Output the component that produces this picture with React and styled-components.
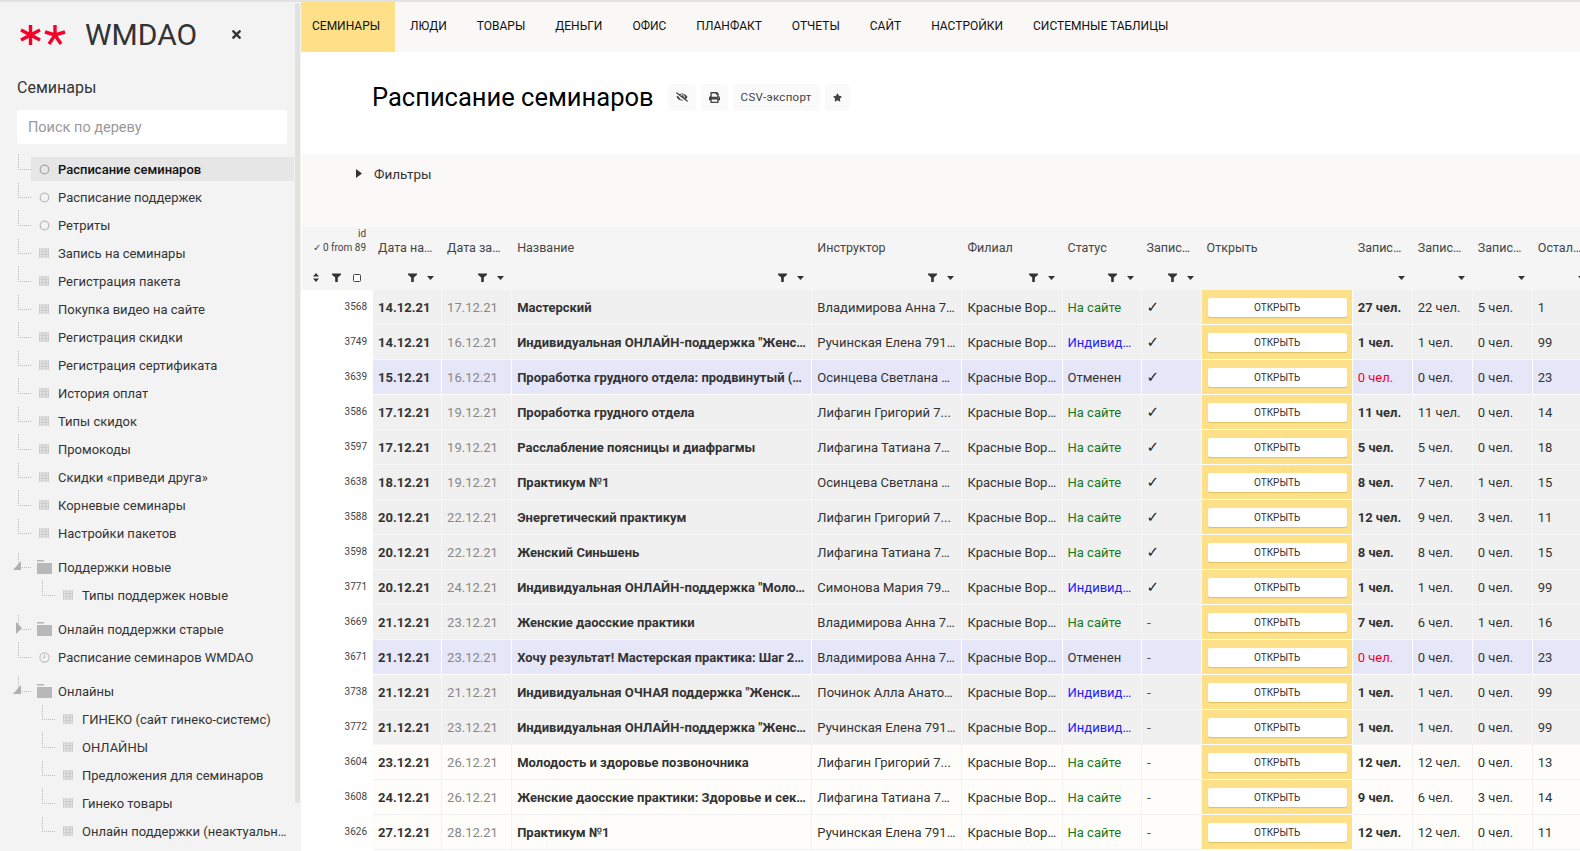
import React from 'react'
import styled, { createGlobalStyle } from 'styled-components'
import { FaEyeSlash, FaPrint, FaStar, FaTimes } from 'react-icons/fa'

const GlobalStyle = createGlobalStyle`
    html, body {
        margin: 0;
        padding: 0;
        background: #fff;
        font-family: Roboto, "Liberation Sans", sans-serif;
        color: #333;
    }
    * {
        box-sizing: border-box;
    }
`

const Page = styled.div`
    display: flex;
    width: 1580px;
    height: 851px;
    overflow: hidden;
    border-top: 2px solid #e2e2e2;
`

const Sidebar = styled.aside`
    position: relative;
    flex: 0 0 301px;
    height: 100%;
    overflow: hidden;
    background: #f3f3f3;
`

const ScrollThumb = styled.div`
    position: absolute;
    top: 1px;
    right: 1px;
    width: 5px;
    height: 800px;
    border-radius: 3px;
    background: #e1e1de;
`

const LogoRow = styled.div`
    display: flex;
    align-items: center;
    height: 64px;
    padding: 1px 0 0 20px;
`

const LogoName = styled.span`
    margin-left: 19px;
    font-size: 30px;
    color: #333;
`

const CloseButton = styled.span`
    display: flex;
    margin-left: 33px;
    font-size: 13px;
    color: #333;
`

const TreeTitle = styled.div`
    margin-top: 10px;
    padding-left: 17px;
    font-size: 16px;
    line-height: 24px;
    color: #333;
`

const TreeSearch = styled.input`
    display: block;
    width: 270px;
    height: 34px;
    margin: 10px 0 11px 17px;
    padding: 0 11px;
    border: none;
    border-radius: 3px;
    background: #fff;
    font-family: inherit;
    font-size: 14.5px;
    outline: none;

    &::placeholder {
        color: #999;
    }
`

const TreeGroup = styled.div`
    margin-bottom: ${props => props.$last ? 0 : 6}px;
`

const TreeItem = styled.div`
    position: relative;
    display: flex;
    align-items: center;
    height: 28px;
    margin-left: ${props => props.$level * 24}px;
    padding: 0 7px 0 31px;

    &::before {
        content: '';
        position: absolute;
        left: 18px;
        top: 0;
        width: 12px;
        height: 14px;
        border-left: 1px dotted #bbb;
        border-bottom: 1px dotted #bbb;
    }
`

const TreeLabel = styled.div`
    display: flex;
    flex: 1;
    align-items: center;
    min-width: 0;
    height: 24px;
    padding-left: 8px;
    background: ${props => props.$active ? '#e6e6e6' : 'transparent'};
`

const IconSlot = styled.span`
    display: flex;
    flex: 0 0 10px;
    justify-content: center;
    width: 10px;
    min-width: 0;
    margin-right: 9px;
`

const TreeText = styled.span`
    overflow: hidden;
    font-size: 13px;
    font-weight: ${props => props.$active ? 500 : 400};
    color: ${props => props.$active ? '#111' : '#333'};
    white-space: nowrap;
    text-overflow: ellipsis;
`

const Arrow = styled.svg`
    position: absolute;
    left: 13px;
    top: 6px;
`

const Main = styled.main`
    flex: 1;
    min-width: 0;
    height: 100%;
    overflow: hidden;
`

const Nav = styled.nav`
    display: flex;
    height: 50px;
    background: #f9f8f6;
`

const NavItem = styled.a`
    display: flex;
    align-items: center;
    height: 100%;
    padding: 0 15px 2px ${props => props.$active ? 11 : 15}px;
    background: ${props => props.$active ? '#fde087' : 'transparent'};
    font-size: 12px;
    color: #111;
    text-transform: uppercase;
    white-space: nowrap;
`

const PageHead = styled.header`
    display: flex;
    align-items: center;
    height: 103px;
    padding: 0 0 13px 71px;
`

const PageTitle = styled.h1`
    margin: 0 14px 0 0;
    font-size: 25.5px;
    font-weight: 400;
    color: #000;
`

const HeadButton = styled.button`
    display: flex;
    align-items: center;
    height: 27px;
    margin-right: 5px;
    padding: 0 8px;
    border: none;
    border-radius: 4px;
    background: #fafafa;
    font-family: inherit;
    font-size: 11.5px;
    color: #444;
    letter-spacing: 0.3px;
`

const FilterBand = styled.div`
    display: flex;
    align-items: center;
    gap: 12px;
    height: 72px;
    padding: 0 0 35px 54px;
    margin-left: 1px;
    background: #faf9f7;
    font-size: 13.5px;
    color: #333;
`

const DataTable = styled.table`
    width: 1291px;
    margin-left: 1px;
    border-collapse: separate;
    border-spacing: 0;
    table-layout: fixed;
`

const HeadRow = styled.tr`
    height: ${props => props.$height}px;
    background: #f5f5f5;
`

const HeadCell = styled.th`
    overflow: hidden;
    padding: 3px 5px 0;
    font-size: 12.5px;
    font-weight: 400;
    color: #444;
    text-align: left;
    white-space: nowrap;
    text-overflow: ellipsis;
`

const IdHead = styled.th`
    padding: 0 7px 10px 0;
    font-size: 10px;
    font-weight: 400;
    line-height: 14px;
    color: #444;
    text-align: right;
    white-space: nowrap;
`

const ToolCell = styled.td`
    padding: 0 ${props => props.$right || 8}px 0 0;
    vertical-align: middle;
`

const ToolGroup = styled.div`
    display: flex;
    align-items: center;
    justify-content: ${props => props.$spread ? 'space-between' : 'flex-end'};
    gap: 10px;
    padding: ${props => props.$spread ? '0 0 0 11px' : 0};
`

const rowColors = {
    grey: { bg: '#f0f0f0', line: '#f6f6f6' },
    purple: { bg: '#e5e6f7', line: '#fff' },
    cream: { bg: '#fefdf9', line: '#f2f2f2' },
}

const BodyRow = styled.tr`
    height: 35px;
`

const IdCell = styled.td`
    padding: 0 6px 3px 0;
    font-size: 10px;
    color: #444;
    text-align: right;
`

const Cell = styled.td`
    overflow: hidden;
    padding: 0 5px;
    border-right: 1px solid ${props => rowColors[props.$tone].line};
    border-bottom: 1px solid ${props => rowColors[props.$tone].line};
    background: ${props => rowColors[props.$tone].bg};
    font-size: 13px;
    font-weight: ${props => props.$bold ? 700 : 400};
    color: ${props => props.$color || '#333'};
    white-space: nowrap;
    text-overflow: ellipsis;
`

const Mark = styled.span`
    font-family: "DejaVu Sans", sans-serif;
    font-size: ${props => props.$done ? 15 : 13}px;
    line-height: 1;
    color: ${props => props.$done ? '#222' : '#555'};
`

const OpenCell = styled.td`
    padding: 0 5px 0 6px;
    border-right: 1px solid #fff;
    border-bottom: 1px solid #fff;
    background: #fde087;
`

const OpenButton = styled.button`
    display: block;
    width: 139px;
    height: 19px;
    padding: 0;
    border: none;
    border-radius: 2px;
    background: #fff;
    box-shadow: 0 1px 1px rgba(190, 160, 60, 0.5);
    font-family: inherit;
    font-size: 10px;
    color: #333;
    text-transform: uppercase;
`

const Logo = () => (
    <svg width="46" height="22" viewBox="0 0 46 22" stroke="#f6002a" strokeWidth="3.4" fill="none">
        <path d="M10.5 1 V21 M1 6 L10.5 11 L20 6 M1 16 L10.5 11 L20 16" />
        <path d="M35 1 V11 M25 8 L35 11 L45 8 M29 20 L35 11 L41 20" />
    </svg>
)

const GridIcon = () => (
    <svg width="11" height="10" viewBox="0 0 11 10" fill="none" stroke="#c8c8c8" strokeWidth="1">
        <rect x="0.5" y="0.5" width="10" height="9" fill="#e4e4e4" />
        <path d="M0.5 3.5 H10.5 M0.5 6.5 H10.5 M4 0.5 V9.5 M7.5 0.5 V9.5" />
    </svg>
)

const CircleIcon = ({ dark }) => (
    <svg width="11" height="11" viewBox="0 0 11 11" fill="none" style={{ flexShrink: 0 }}>
        <circle cx="5.5" cy="5.5" r="4.3" stroke={dark ? '#a8a8a8' : '#bdbdbd'} strokeWidth="1.3" />
    </svg>
)

const ClockIcon = () => (
    <svg width="11" height="11" viewBox="0 0 11 11" fill="none" stroke="#bdbdbd" strokeWidth="1.1" style={{ flexShrink: 0 }}>
        <circle cx="5.5" cy="5.5" r="4.6" />
        <path d="M5.5 2.8 V5.8 H3.5" />
    </svg>
)

const FolderIcon = () => (
    <svg width="15" height="14" viewBox="0 0 15 14" style={{ flexShrink: 0 }}>
        <rect x="0" y="0" width="7" height="1.5" fill="#b5b5b5" />
        <rect x="0" y="3" width="15" height="11" fill="#b8b8b8" />
    </svg>
)

const OpenArrow = () => (
    <Arrow width="10" height="12" viewBox="0 0 10 12">
        <path d="M8 2 V11 H0 Z" fill="#b0b0b0" />
    </Arrow>
)

const ClosedArrow = () => (
    <Arrow width="10" height="14" viewBox="0 0 10 14">
        <path d="M3 1 L9 7 L3 13 Z" fill="#b0b0b0" />
    </Arrow>
)

const Funnel = () => (
    <svg width="9" height="9" viewBox="0 0 9 9">
        <path d="M0 0.5 H9 V1.8 L5.8 4.5 V9 H3.2 V4.5 L0 1.8 Z" fill="#333" />
    </svg>
)

const Caret = () => (
    <svg width="7" height="4" viewBox="0 0 7 4">
        <path d="M0 0 H7 L3.5 4 Z" fill="#333" />
    </svg>
)

const SortIcon = () => (
    <svg width="6" height="9" viewBox="0 0 6 9">
        <path d="M3 0 L6 3.5 H0 Z M3 9 L6 5.5 H0 Z" fill="#333" />
    </svg>
)

const CheckBox = () => (
    <svg width="8" height="8" viewBox="0 0 8 8" fill="#fff" stroke="#444" strokeWidth="1">
        <rect x="0.5" y="0.5" width="7" height="7" rx="1" />
    </svg>
)

const plainItems = [
    'Запись на семинары', 'Регистрация пакета', 'Покупка видео на сайте', 'Регистрация скидки',
    'Регистрация сертификата', 'История оплат', 'Типы скидок', 'Промокоды',
    'Скидки «приведи друга»', 'Корневые семинары', 'Настройки пакетов',
]

const onlineItems = [
    'ГИНЕКО (сайт гинеко-системс)', 'ОНЛАЙНЫ', 'Предложения для семинаров',
    'Гинеко товары', 'Онлайн поддержки (неактуальные)',
]

const navItems = [
    'Семинары', 'Люди', 'Товары', 'Деньги', 'Офис', 'Планфакт', 'Отчеты', 'Сайт', 'Настройки',
    'Системные таблицы',
]

const columns = [
    { title: 'Дата начала', width: 69, funnel: true },
    { title: 'Дата завершения', width: 70, funnel: true },
    { title: 'Название', width: 300, funnel: true },
    { title: 'Инструктор', width: 150, funnel: true },
    { title: 'Филиал', width: 100, funnel: true },
    { title: 'Статус', width: 79, funnel: true },
    { title: 'Записаны', width: 60, funnel: true },
    { title: 'Открыть', width: 151, none: true },
    { title: 'Записано', width: 60 },
    { title: 'Записано онлайн', width: 60 },
    { title: 'Записано очно', width: 60 },
    { title: 'Осталось мест', width: 60 },
]

const ANNA = 'Владимирова Анна 79261234567'
const ELENA = 'Ручинская Елена 79161234567'
const OSINT = 'Осинцева Светлана Николаевна'
const GRIG = 'Лифагин Григорий 7...'
const TATI = 'Лифагина Татиана 79031234567'
const GREEN = 'На сайте'
const BLUE = 'Индивидуально'
const CANCEL = 'Отменен'

const rows = [
    [3568, '14.12.21', '17.12.21', 'Мастерский', ANNA, GREEN, '✓', 27, 22, 5, 1, 'grey'],
    [3749, '14.12.21', '16.12.21', 'Индивидуальная ОНЛАЙН-поддержка "Женское здоровье"', ELENA, BLUE, '✓', 1, 1, 0, 99, 'grey'],
    [3639, '15.12.21', '16.12.21', 'Проработка грудного отдела: продвинутый (онлайн)', OSINT, CANCEL, '✓', 0, 0, 0, 23, 'purple'],
    [3586, '17.12.21', '19.12.21', 'Проработка грудного отдела', GRIG, GREEN, '✓', 11, 11, 0, 14, 'grey'],
    [3597, '17.12.21', '19.12.21', 'Расслабление поясницы и диафрагмы', TATI, GREEN, '✓', 5, 5, 0, 18, 'grey'],
    [3638, '18.12.21', '19.12.21', 'Практикум №1', OSINT, GREEN, '✓', 8, 7, 1, 15, 'grey'],
    [3588, '20.12.21', '22.12.21', 'Энергетический практикум', GRIG, GREEN, '✓', 12, 9, 3, 11, 'grey'],
    [3598, '20.12.21', '22.12.21', 'Женский Синьшень', TATI, GREEN, '✓', 8, 8, 0, 15, 'grey'],
    [3771, '20.12.21', '24.12.21', 'Индивидуальная ОНЛАЙН-поддержка "Молодость"', 'Симонова Мария 79161234567', BLUE, '✓', 1, 1, 0, 99, 'grey'],
    [3669, '21.12.21', '23.12.21', 'Женские даосские практики', ANNA, GREEN, '-', 7, 6, 1, 16, 'grey'],
    [3671, '21.12.21', '23.12.21', 'Хочу результат! Мастерская практика: Шаг 2 (онлайн)', ANNA, CANCEL, '-', 0, 0, 0, 23, 'purple'],
    [3738, '21.12.21', '21.12.21', 'Индивидуальная ОЧНАЯ поддержка "Женское здоровье"', 'Починок Алла Анатольевна', BLUE, '-', 1, 1, 0, 99, 'grey'],
    [3772, '21.12.21', '23.12.21', 'Индивидуальная ОНЛАЙН-поддержка "Женское здоровье"', ELENA, BLUE, '-', 1, 1, 0, 99, 'grey'],
    [3604, '23.12.21', '26.12.21', 'Молодость и здоровье позвоночника', GRIG, GREEN, '-', 12, 12, 0, 13, 'cream'],
    [3608, '24.12.21', '26.12.21', 'Женские даосские практики: Здоровье и сексуальность', TATI, GREEN, '-', 9, 6, 3, 14, 'cream'],
    [3626, '27.12.21', '28.12.21', 'Практикум №1', ELENA, GREEN, '-', 12, 12, 0, 11, 'cream'],
]

const statusColor = status => {
    if (status === GREEN) return '#16781b'
    if (status === BLUE) return '#1b1bff'
    return '#333'
}

const Node = ({ level = 0, icon, label, active, arrow }) => (
    <TreeItem $level={level}>
        {arrow}
        <TreeLabel $active={active}>
            <IconSlot>{icon}</IconSlot>
            <TreeText $active={active}>{label}</TreeText>
        </TreeLabel>
    </TreeItem>
)

const App = () => (
    <Page>
        <GlobalStyle />
        <Sidebar>
            <ScrollThumb />
            <LogoRow>
                <Logo />
                <LogoName>WMDAO</LogoName>
                <CloseButton><FaTimes /></CloseButton>
            </LogoRow>
            <TreeTitle>Семинары</TreeTitle>
            <TreeSearch placeholder="Поиск по дереву" />
            <Node icon={<CircleIcon dark />} label="Расписание семинаров" active />
            <Node icon={<CircleIcon />} label="Расписание поддержек" />
            <Node icon={<CircleIcon />} label="Ретриты" />
            <TreeGroup>
                {plainItems.map(item => <Node key={item} icon={<GridIcon />} label={item} />)}
            </TreeGroup>
            <TreeGroup>
                <Node icon={<FolderIcon />} label="Поддержки новые" arrow={<OpenArrow />} />
                <Node level={1} icon={<GridIcon />} label="Типы поддержек новые" />
            </TreeGroup>
            <TreeGroup>
                <Node icon={<FolderIcon />} label="Онлайн поддержки старые" arrow={<ClosedArrow />} />
                <Node icon={<ClockIcon />} label="Расписание семинаров WMDAO" />
            </TreeGroup>
            <TreeGroup $last>
                <Node icon={<FolderIcon />} label="Онлайны" arrow={<OpenArrow />} />
                {onlineItems.map(item => <Node key={item} level={1} icon={<GridIcon />} label={item} />)}
            </TreeGroup>
        </Sidebar>
        <Main>
            <Nav>
                {navItems.map((item, i) => <NavItem key={item} $active={i === 0}>{item}</NavItem>)}
            </Nav>
            <PageHead>
                <PageTitle>Расписание семинаров</PageTitle>
                <HeadButton><FaEyeSlash size={12} /></HeadButton>
                <HeadButton><FaPrint size={11} /></HeadButton>
                <HeadButton>CSV-экспорт</HeadButton>
                <HeadButton><FaStar size={9} /></HeadButton>
            </PageHead>
            <FilterBand>
                <svg width="6" height="9" viewBox="0 0 6 9"><path d="M0 0 L6 4.5 L0 9 Z" fill="#333" /></svg>
                Фильтры
            </FilterBand>
            <DataTable>
                <colgroup>
                    <col style={{ width: 71 }} />
                    {columns.map(col => <col key={col.title} style={{ width: col.width }} />)}
                </colgroup>
                <thead>
                    <HeadRow $height={38}>
                        <IdHead>id<br />✓ 0 from 89</IdHead>
                        {columns.map(col => <HeadCell key={col.title}>{col.title}</HeadCell>)}
                    </HeadRow>
                    <HeadRow $height={25}>
                        <ToolCell $right={12}>
                            <ToolGroup $spread>
                                <SortIcon />
                                <Funnel />
                                <CheckBox />
                            </ToolGroup>
                        </ToolCell>
                        {columns.map(col => (
                            <ToolCell key={col.title}>
                                {!col.none && (
                                    <ToolGroup>
                                        {col.funnel && <Funnel />}
                                        <Caret />
                                    </ToolGroup>
                                )}
                            </ToolCell>
                        ))}
                    </HeadRow>
                </thead>
                <tbody>
                    {rows.map(row => {
                        const [id, start, end, name, teacher, status, mark, total, online, offline, left, tone] = row
                        return (
                            <BodyRow key={id}>
                                <IdCell>{id}</IdCell>
                                <Cell $tone={tone} $bold>{start}</Cell>
                                <Cell $tone={tone} $color="#888">{end}</Cell>
                                <Cell $tone={tone} $bold>{name}</Cell>
                                <Cell $tone={tone}>{teacher}</Cell>
                                <Cell $tone={tone}>Красные Ворота</Cell>
                                <Cell $tone={tone} $color={statusColor(status)}>{status}</Cell>
                                <Cell $tone={tone}><Mark $done={mark === '✓'}>{mark}</Mark></Cell>
                                <OpenCell><OpenButton>Открыть</OpenButton></OpenCell>
                                <Cell $tone={tone} $bold={total > 0} $color={total > 0 ? '#333' : '#f6002a'}>{total} чел.</Cell>
                                <Cell $tone={tone}>{online} чел.</Cell>
                                <Cell $tone={tone}>{offline} чел.</Cell>
                                <Cell $tone={tone}>{left}</Cell>
                            </BodyRow>
                        )
                    })}
                </tbody>
            </DataTable>
        </Main>
    </Page>
)

export default App
